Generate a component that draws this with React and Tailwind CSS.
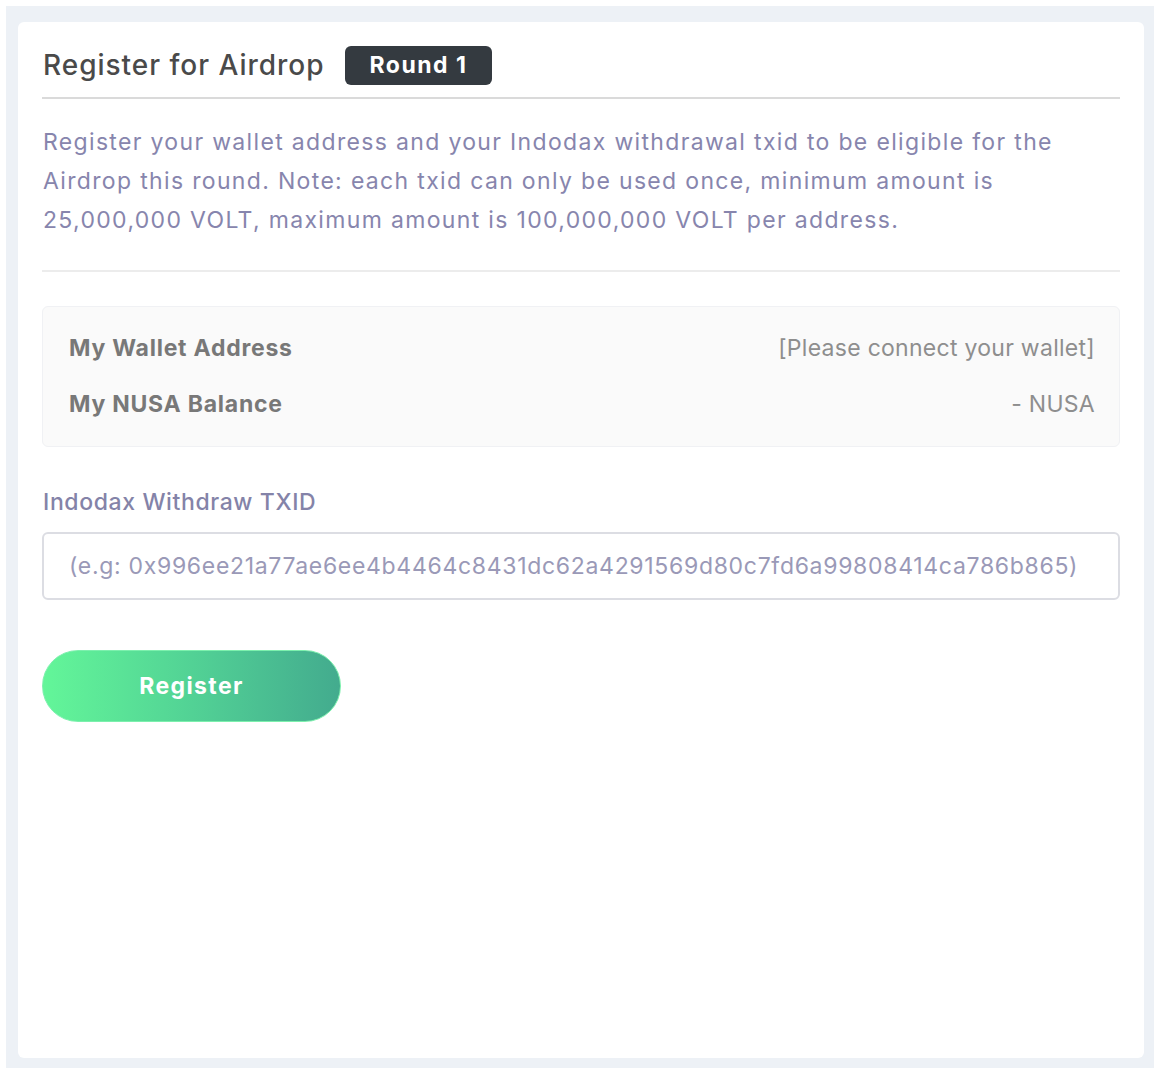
import React, { useState } from 'react';

function InfoRow({ label, value }) {
  return (
    <div className="flex items-center justify-between leading-[32px]">
      <span className="font-bold tracking-[0.033em] text-[#787878]">{label}</span>
      <span className="tracking-[0.012em] text-[#8e8e8e]">{value}</span>
    </div>
  );
}

function App() {
  const [txid, setTxid] = useState('');

  return (
    <div
      className="min-h-[1072px] bg-white p-[6px] text-[23px]"
      style={{ fontFamily: 'Inter, "Noto Sans", sans-serif' }}
    >
      <div className="bg-[#edf1f6] pt-4 pb-[10px] pl-3 pr-[10px]">
        <div className="h-[1036px] rounded-md bg-white px-6 pt-6">
          <div className="flex items-center gap-5 border-b-2 border-[#dadada] pb-3">
            <h1 className="ml-px text-[28px] font-medium leading-[39px] tracking-[0.035em] text-[#4a4a4a]">
              Register for Airdrop
            </h1>
            <span className="rounded-md bg-[#343a40] px-[25px] text-[23px] font-bold leading-[39px] tracking-[0.065em] text-white">
              Round 1
            </span>
          </div>

          <p className="mt-6 border-b-2 border-[#ececec] pb-[30px] pl-px leading-[39px] tracking-[0.058em] text-[#8785ad]">
            Register your wallet address and your Indodax withdrawal txid to be eligible for the
            <br />
            Airdrop this round. Note: each txid can only be used once, minimum amount is
            <br />
            25,000,000 VOLT, maximum amount is 100,000,000 VOLT per address.
          </p>

          <div className="mt-[34px] flex flex-col gap-6 rounded-md border border-[#f0f1f4] bg-[#fafafa] pt-[25px] pb-[26px] pl-[26px] pr-6">
            <InfoRow label="My Wallet Address" value="[Please connect your wallet]" />
            <InfoRow label="My NUSA Balance" value="- NUSA" />
          </div>

          <label className="mt-[39px] block pl-px font-medium leading-[32px] tracking-[0.027em] text-[#8483a8]">
            Indodax Withdraw TXID
          </label>
          <input
            value={txid}
            onChange={(e) => setTxid(e.target.value)}
            placeholder="(e.g: 0x996ee21a77ae6ee4b4464c8431dc62a4291569d80c7fd6a99808414ca786b865)"
            className="mt-[14px] h-[68px] w-full rounded-md border-2 border-[#dcdde3] px-[25px] text-[23px] tracking-[0.03em] text-[#555] outline-none placeholder:text-[#9a99b7]"
          />

          <button className="mt-[50px] h-[72px] w-[299px] rounded-full border border-[#7cf0ad] bg-gradient-to-r from-[#63f699] via-[#52d295] to-[#43ab8e] text-[23px] font-bold tracking-[0.06em] text-white">
            Register
          </button>
        </div>
      </div>
    </div>
  );
}

export default App;
